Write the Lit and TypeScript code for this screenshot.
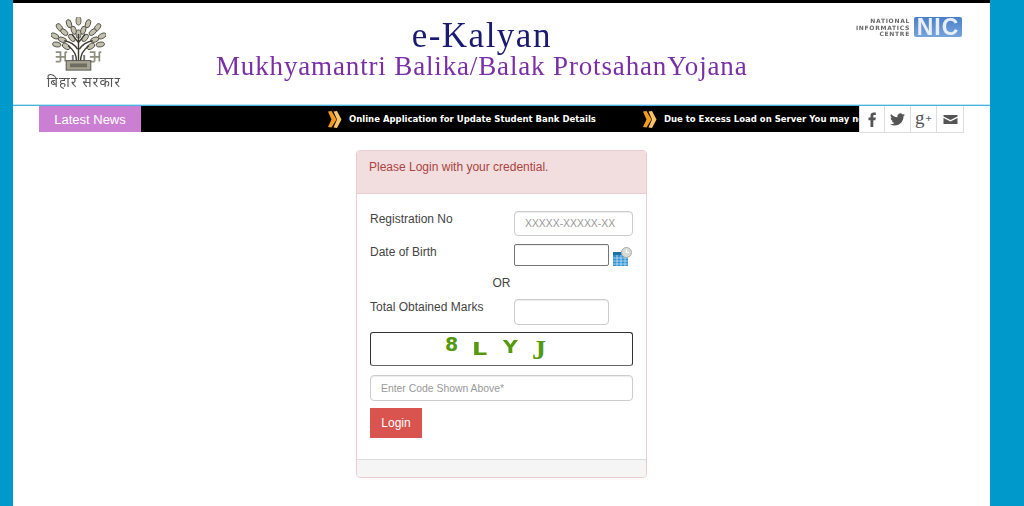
import { LitElement, html, css, svg } from 'lit';
import { customElement } from 'lit/decorators.js';

// leaves of the emblem tree: x, y, rotation
const LEAVES = [
  [29, 4, 0], [19, 7, -20], [39, 7, 20], [9, 11, -35], [49, 11, 35],
  [14, 16, -50], [24, 14, -20], [34, 14, 20], [44, 16, 50], [4, 20, -65],
  [54, 20, 65], [12, 24, -70], [22, 22, -40], [36, 22, 40], [46, 24, 70],
  [6, 29, -80], [52, 29, 80], [16, 31, -60], [42, 31, 60], [29, 18, 0],
];

const arrow = html`<svg class="arrow" viewBox="0 0 15 19">
  <path d="M1 1.500 4.500 1l5 8.500-5 8-3.500-.5 3.500-7.500z" fill="#f39c1f"></path>
  <path d="M6.500 1.500 10 1l4.500 8.500L10 18l-3.500-.5 3.500-8z" fill="#fcc46a"></path>
</svg>`;

@customElement('app-root')
class AppRoot extends LitElement {
  static styles = css`
    :host {
      display: block;
      height: 506px;
      overflow: hidden;
      background: #0099cc;
      font-family: 'Liberation Sans', Arial, sans-serif;
    }
    .page {
      margin: 0 34px 0 13px;
      height: 503px;
      background: #fff;
      border-top: 3px solid #000;
    }
    .header {
      display: flex;
      height: 102px;
      border-bottom: 1px solid #45b4e0;
      box-shadow: inset 0 -1px 0 rgba(69, 180, 224, 0.35);
      box-sizing: content-box;
    }
    .emblem {
      display: flex;
      flex-direction: column;
      align-items: center;
      width: 76px;
      margin: 14px 0 0 33px;
      filter: blur(0.5px);
    }
    .emblem svg {
      width: 55px;
      height: 55px;
      margin-right: 11px;
      display: block;
    }
    .emblem span {
      font-family: 'Noto Sans', 'DejaVu Sans', sans-serif;
      font-size: 13.500px;
      letter-spacing: 1.200px;
      line-height: 16px;
      margin-top: 2px;
      color: #555;
      white-space: nowrap;
    }
    .title {
      display: flex;
      flex-direction: column;
      align-items: center;
      margin: 16px 0 0 94px;
      font-family: 'Liberation Serif', 'Times New Roman', serif;
      white-space: nowrap;
      filter: blur(0.3px);
    }
    .title .main {
      font-size: 35px;
      line-height: 34px;
      letter-spacing: 1.500px;
      color: #1a1a70;
    }
    .title .sub {
      font-size: 27px;
      line-height: 26px;
      letter-spacing: 0.850px;
      color: #7a2fa8;
    }
    .nic {
      display: flex;
      gap: 4px;
      margin: 14px 28px 0 auto;
      height: 20px;
      filter: blur(0.4px);
    }
    .nic .words {
      font-family: 'DejaVu Sans', sans-serif;
      font-size: 6px;
      line-height: 6.500px;
      font-weight: bold;
      letter-spacing: 0.7px;
      text-align: right;
      color: #666;
      white-space: nowrap;
      padding-top: 1px;
    }
    .nic .mark {
      width: 48px;
      height: 20px;
      background: linear-gradient(#4a7fc8, #78a4dc);
      border-radius: 2px;
      color: #e8effa;
      font-size: 23px;
      line-height: 20px;
      font-weight: bold;
      text-align: center;
      letter-spacing: 1px;
    }
    .news {
      display: flex;
      margin: 0 26px;
      height: 26px;
    }
    .news .label {
      flex: none;
      width: 102px;
      background: #cb7fd3;
      color: #fff;
      font-size: 13px;
      line-height: 27px;
      text-align: center;
    }
    .ticker {
      flex: 1;
      min-width: 0;
      display: flex;
      align-items: center;
      overflow: hidden;
      background: #000;
      padding-left: 186px;
      white-space: nowrap;
      color: #fff;
      font-family: 'DejaVu Sans', Verdana, sans-serif;
      font-size: 8.500px;
      font-weight: bold;
    }
    .ticker span {
      flex: none;
      margin: 0 46px 0 7px;
    }
    .arrow {
      flex: none;
      width: 15px;
      height: 19px;
    }
    .social {
      flex: none;
      display: flex;
      height: 27px;
    }
    .social div {
      box-sizing: border-box;
      width: 26px;
      height: 27px;
      display: flex;
      align-items: center;
      justify-content: center;
      border: 1px solid #ddd;
      border-left: none;
      border-top: none;
      background: #fff;
      color: #555;
    }
    .social div:first-child {
      border-left: 1px solid #ddd;
    }
    .social div:last-child {
      width: 27px;
    }
    .social svg {
      width: 15px;
      height: 15px;
      fill: #555;
    }
    .social .gplus {
      font-family: 'Liberation Serif', serif;
      font-size: 19px;
      line-height: 20px;
      padding-bottom: 3px;
    }
    .social .gplus small {
      font-size: 11px;
      font-weight: bold;
      margin-left: 1px;
    }
    .panel {
      box-sizing: border-box;
      width: 291px;
      height: 328px;
      margin: 18px 0 0 343px;
      border: 1px solid #ebccd1;
      border-radius: 4px;
      display: flex;
      flex-direction: column;
      overflow: hidden;
      color: #444;
      font-size: 12px;
    }
    .heading {
      height: 43px;
      flex: none;
      box-sizing: border-box;
      padding: 8px 12px;
      line-height: 16px;
      background: #f2dede;
      color: #a94442;
      border-bottom: 1px solid #ebccd1;
    }
    .body {
      flex: 1;
      padding: 17px 13px 0;
      display: flex;
      flex-direction: column;
    }
    .row {
      display: grid;
      grid-template-columns: 144px auto 1fr;
      line-height: 17px;
    }
    .row.first {
      margin-bottom: 8px;
    }
    input {
      box-sizing: border-box;
      margin: 0;
      padding: 0 10px;
      border: 1px solid #ccc;
      border-radius: 4px;
      background: #fff;
      font-family: inherit;
      font-size: 10.400px;
      outline: none;
      box-shadow: inset 0 1px 1px rgba(0, 0, 0, 0.075);
    }
    input::placeholder {
      color: #999;
      opacity: 1;
    }
    .wide {
      width: 119px;
      height: 25px;
    }
    .dob {
      width: 95px;
      height: 22px;
      border-color: #767676;
      border-radius: 2px;
    }
    .marks {
      width: 95px;
      height: 26px;
    }
    .cal {
      width: 20px;
      height: 20px;
      margin: 3px 0 0 3px;
    }
    .or {
      line-height: 33px;
      height: 32px;
      text-align: center;
    }
    .captcha {
      box-sizing: border-box;
      height: 34px;
      margin-top: 7px;
      border: 1px solid #333;
      border-bottom-color: #666;
      border-radius: 3px;
      display: flex;
      padding-left: 74px;
      color: #549a0e;
      font-weight: bold;
    }
    .captcha span {
      flex: none;
      transform-origin: left center;
    }
    .c8 {
      font-family: 'DejaVu Sans', sans-serif;
      font-size: 19px;
      line-height: 22px;
      margin: 0;
      width: 27px;
    }
    .cl {
      font-family: 'DejaVu Sans', sans-serif;
      font-size: 17px;
      line-height: 18px;
      margin-top: 7px;
      width: 31px;
      transform: scaleX(1.4);
    }
    .cy {
      font-family: 'DejaVu Sans', sans-serif;
      font-size: 17px;
      line-height: 18px;
      margin-top: 5px;
      width: 30px;
      transform: scaleX(1.2);
    }
    .cj {
      font-family: 'Liberation Serif', serif;
      font-size: 28px;
      line-height: 26px;
      margin-top: 4px;
      transform: translateX(-1px);
    }
    .code {
      width: 263px;
      height: 26px;
      margin-top: 9px;
    }
    button {
      align-self: flex-start;
      box-sizing: border-box;
      width: 52px;
      height: 30px;
      margin: 7px 0 0;
      padding: 0;
      border: 1px solid #d9534f;
      background: #d9534f;
      color: #fff;
      font-family: inherit;
      font-size: 12px;
    }
    .foot {
      flex: none;
      height: 18px;
      box-sizing: border-box;
      background: #f5f5f5;
      border-top: 1px solid #ddd;
    }
  `;

  renderEmblem() {
    return html`<svg viewBox="0 0 58 58">
      ${LEAVES.map(
        ([x, y, r]) => svg`<ellipse cx=${x} cy=${y} rx="2.600" ry="4.500" fill="#c4c0b0" stroke="#4c4a3e" stroke-width="0.900" transform="rotate(${r} ${x} ${y})"></ellipse>`
      )}
      <path d="M29 48V18M27 48c0-8-2-12-9-18M31 48c0-8 2-12 9-18M28 34c-3-5-8-8-14-9M30 34c3-5 8-8 14-9M29 27l-7-9M29 27l7-9"
        fill="none" stroke="#3c3a30" stroke-width="1.500"></path>
      <path d="M23 48v-8M35 48v-8" stroke="#777" stroke-width="2"></path>
      <path d="M5 37h5v5h5v-5h0M10 37v10M5 42h10M5 47h5M15 42v5M15 37h2"
        fill="none" stroke="#8f8d7c" stroke-width="1.800"></path>
      <path d="M41 37h5v5h5v-5h0M46 37v10M41 42h10M41 47h5M51 42v5M51 37h2"
        fill="none" stroke="#8f8d7c" stroke-width="1.800"></path>
      <rect x="16" y="46" width="26" height="10" fill="#a5a392" stroke="#55534a"></rect>
      <rect x="20" y="49" width="18" height="4" fill="#6f6d60"></rect>
    </svg>`;
  }

  render() {
    return html`
      <div class="page">
        <header class="header">
          <div class="emblem">
            ${this.renderEmblem()}
            <span>बिहार सरकार</span>
          </div>
          <div class="title">
            <div class="main">e-Kalyan</div>
            <div class="sub">Mukhyamantri Balika/Balak ProtsahanYojana</div>
          </div>
          <div class="nic">
            <div class="words">NATIONAL<br />INFORMATICS<br />CENTRE</div>
            <div class="mark">NIC</div>
          </div>
        </header>

        <div class="news">
          <div class="label">Latest News</div>
          <div class="ticker">
            ${arrow}<span>Online Application for Update Student Bank Details</span>
            ${arrow}<span>Due to Excess Load on Server You may not</span>
          </div>
          <div class="social">
            <div>
              <svg viewBox="0 0 15 15"><path d="M5.500 15V8.200H3.500V5.600h2V3.800C5.500 1.500 6.800.5 8.800.5c.9 0 1.700.1 2 .1v2.300H9.500c-1 0-1.200.5-1.200 1.200v1.500h2.500l-.4 2.600H8.300V15z"></path></svg>
            </div>
            <div>
              <svg viewBox="0 0 24 24"><path d="M23.950 4.570a10 10 0 0 1-2.820.77 4.960 4.960 0 0 0 2.160-2.720c-.95.550-2 .96-3.130 1.190a4.920 4.920 0 0 0-8.380 4.480C7.690 8.090 4.060 6.130 1.640 3.160a4.820 4.820 0 0 0-.67 2.480c0 1.710.87 3.210 2.190 4.100a4.900 4.900 0 0 1-2.230-.62v.06a4.920 4.920 0 0 0 3.950 4.830 5 5 0 0 1-2.210.08 4.940 4.940 0 0 0 4.600 3.420A9.870 9.870 0 0 1 0 19.540a14 14 0 0 0 7.560 2.210c9.050 0 14-7.500 14-13.980 0-.21 0-.42-.02-.63a9.940 9.940 0 0 0 2.410-2.570z"></path></svg>
            </div>
            <div class="gplus">g<small>+</small></div>
            <div>
              <svg viewBox="0 0 15 15"><path d="M.5 3h14v1.500L7.500 8 .5 4.500zM.5 6l7 3.500 7-3.500v6H.5z"></path></svg>
            </div>
          </div>
        </div>

        <section class="panel">
          <div class="heading">Please Login with your credential.</div>
          <div class="body">
            <div class="row first">
              <label>Registration No</label>
              <input class="wide" placeholder="XXXXX-XXXXX-XX" />
            </div>
            <div class="row">
              <label>Date of Birth</label>
              <input class="dob" />
              <svg class="cal" viewBox="0 0 20 20">
                <path d="M1 5h15v14H1z" fill="#2f8fd0"></path>
                <path d="M1 5h15v3H1z" fill="#1f6f9f"></path>
                <path d="M1 11h15M1 14h15M1 17h15M5 8v11M9 8v11M13 8v11" stroke="#bfe3f7" stroke-width="0.800"></path>
                <circle cx="14.500" cy="5.500" r="5" fill="#d8dcd8" stroke="#aaa"></circle>
                <path d="M14.500 2.500v3H17" fill="none" stroke="#fff" stroke-width="1.200"></path>
              </svg>
            </div>
            <div class="or">OR</div>
            <div class="row">
              <label>Total Obtained Marks</label>
              <input class="marks" />
            </div>
            <div class="captcha">
              <span class="c8">8</span><span class="cl">L</span><span class="cy">Y</span><span class="cj">J</span>
            </div>
            <input class="code" placeholder="Enter Code Shown Above*" />
            <button>Login</button>
          </div>
          <div class="foot"></div>
        </section>
      </div>
    `;
  }
}

declare global {
  interface HTMLElementTagNameMap {
    'app-root': AppRoot;
  }
}
